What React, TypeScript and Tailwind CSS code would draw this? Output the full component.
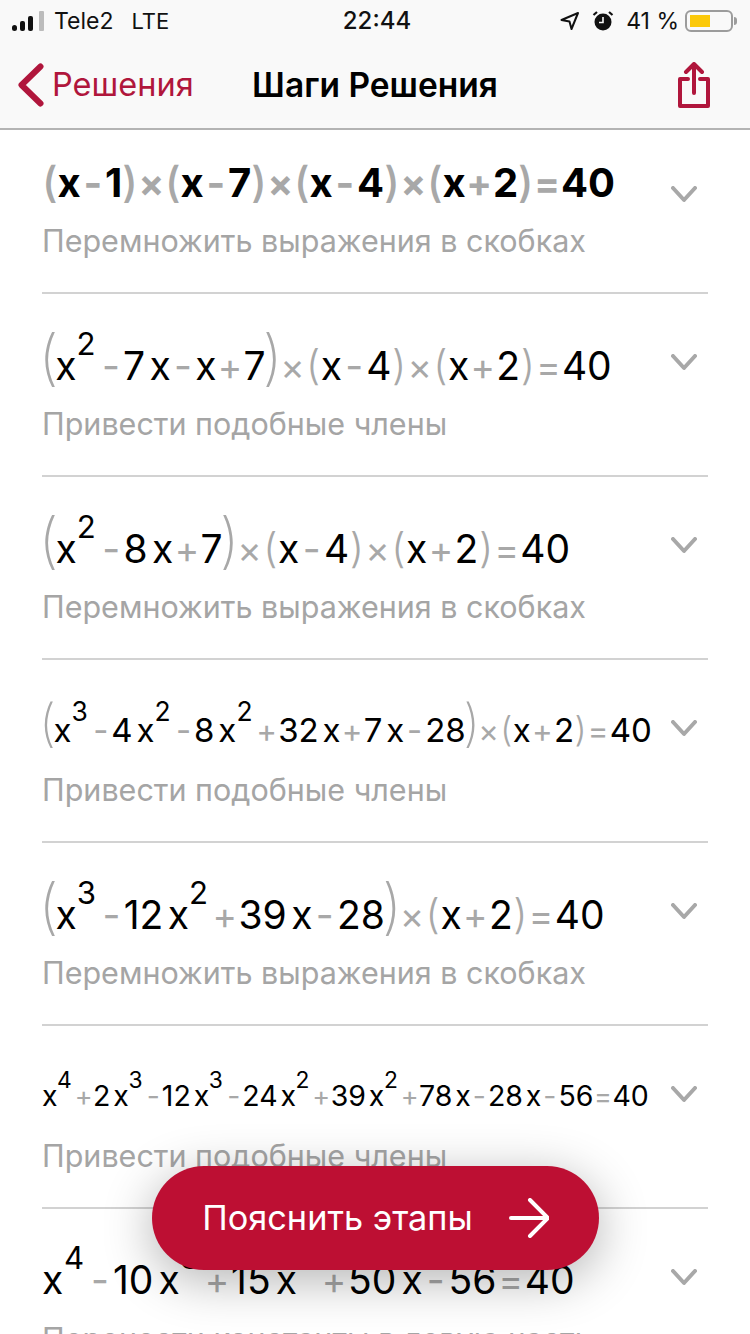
const Token = ({ value, prev, bold }: { value: string; prev?: string; bold: boolean }) => {
  if (value.startsWith('^'))
    return <span className="-translate-y-[0.8em] text-[0.8em] -ml-[0.02em] mr-[0.1em]">{value.slice(1)}</span>;
  if (value === '((' || value === '))')
    return (
      <span className="text-[1.55em] leading-none font-extralight text-[#a8a8a8] -translate-y-[0.02em] -mx-[0.06em]">
        {value[0]}
      </span>
    );
  if (value === '(' || value === ')')
    return (
      <span className={`text-[1.05em] text-[#a8a8a8] leading-none ${bold ? 'font-medium' : 'font-light'}`}>{value}</span>
    );
  if (value === '-') return <span className="text-[#a8a8a8] mx-[0.07em]">-</span>;
  if (['+', '=', '×'].includes(value))
    return <span className="text-[#a8a8a8] text-[0.95em] mx-[0.02em]">{value}</span>;
  if (value === 'x' && prev && /\d$/.test(prev)) return <span className="ml-[0.1em]">x</span>;
  return <span>{value}</span>;
};

type Step = {
  expr: string;
  hint: string;
  row: string;
  math: string;
  hintGap: string;
  chevron: string;
};

const steps: Step[] = [
  {
    expr: '( x - 1 ) × ( x - 7 ) × ( x - 4 ) × ( x + 2 ) = 40',
    hint: 'Перемножить выражения в скобках',
    row: 'h-[164px]',
    math: 'text-[40px] font-bold h-[68px] pt-[23px]',
    hintGap: 'mt-[25px]',
    chevron: 'mt-[56px]',
  },
  {
    expr: '(( x ^2 - 7 x - x + 7 )) × ( x - 4 ) × ( x + 2 ) = 40',
    hint: 'Привести подобные члены',
    row: 'h-[183px]',
    math: 'text-[39px] gap-x-[0.5px] h-[80px] pt-[34px]',
    hintGap: 'mt-[32px]',
    chevron: 'mt-[60px]',
  },
  {
    expr: '(( x ^2 - 8 x + 7 )) × ( x - 4 ) × ( x + 2 ) = 40',
    hint: 'Перемножить выражения в скобках',
    row: 'h-[183px]',
    math: 'text-[39px] gap-x-[0.6px] h-[80px] pt-[34px]',
    hintGap: 'mt-[32px]',
    chevron: 'mt-[60px]',
  },
  {
    expr: '(( x ^3 - 4 x ^2 - 8 x ^2 + 32 x + 7 x - 28 )) × ( x + 2 ) = 40',
    hint: 'Привести подобные члены',
    row: 'h-[183px]',
    math: 'text-[33px] gap-x-[0.55px] h-[80px] pt-[38px]',
    hintGap: 'mt-[32px]',
    chevron: 'mt-[60px]',
  },
  {
    expr: '(( x ^3 - 12 x ^2 + 39 x - 28 )) × ( x + 2 ) = 40',
    hint: 'Перемножить выражения в скобках',
    row: 'h-[183px]',
    math: 'text-[39px] gap-x-[0.6px] h-[80px] pt-[34px]',
    hintGap: 'mt-[32px]',
    chevron: 'mt-[60px]',
  },
  {
    expr: 'x ^4 + 2 x ^3 - 12 x ^3 - 24 x ^2 + 39 x ^2 + 78 x - 28 x - 56 = 40',
    hint: 'Привести подобные члены',
    row: 'h-[183px]',
    math: 'text-[28.5px] h-[80px] pt-[49px]',
    hintGap: 'mt-[32px]',
    chevron: 'mt-[60px]',
  },
  {
    expr: 'x ^4 - 10 x ^3 + 15 x ^2 + 50 x - 56 = 40',
    hint: 'Перенести константы в левую часть',
    row: 'h-[183px]',
    math: 'text-[39px] gap-x-[1.2px] h-[80px] pt-[42px]',
    hintGap: 'mt-[32px]',
    chevron: 'mt-[60px]',
  },
];

const StepRow = ({ step }: { step: Step }) => {
  const tokens = step.expr.split(' ');
  const bold = step.math.includes('font-bold');
  return (
    <div className={`flex justify-between border-b-2 border-[#d2d2d2] pr-[11px] ${step.row}`}>
      <div>
        <div className={`flex items-baseline whitespace-nowrap text-black ${step.math}`}>
          {tokens.map((t, i) => (
            <Token key={i} value={t} prev={tokens[i - 1]} bold={bold} />
          ))}
        </div>
        <p className={`text-[30.5px] leading-[36px] text-[#a5a5a5] whitespace-nowrap ${step.hintGap}`}>{step.hint}</p>
      </div>
      <svg width="26" height="17" viewBox="0 0 26 17" fill="none" className={`shrink-0 ${step.chevron}`}>
        <path d="M2 2l11 12L24 2" stroke="#a8a8a8" strokeWidth="4" strokeLinecap="round" strokeLinejoin="round" />
      </svg>
    </div>
  );
};

export default function App() {
  return (
    <div className="relative h-[1334px] w-[750px] overflow-hidden bg-white font-['Inter',sans-serif]">
      <header className="bg-[#f9f9f9] border-b-2 border-[#b4b4b4] h-[130px]">
        <div className="grid grid-cols-[1fr_auto_1fr] items-center h-[42px] px-[12px] text-[23px] text-[#111]">
          <div className="flex items-center">
            <svg width="32" height="20" viewBox="0 0 32 20">
              <rect x="0" y="14" width="5" height="6" rx="2.5" fill="#111" />
              <rect x="8" y="10" width="5" height="10" rx="2" fill="#111" />
              <rect x="16" y="5" width="5" height="15" rx="2" fill="#111" />
              <rect x="27" y="0" width="5" height="20" rx="1" fill="#bcbcbc" />
            </svg>
            <span className="ml-[10px]">Tele2</span>
            <span className="ml-[18px] text-[22px]">LTE</span>
          </div>
          <span className="ml-[4px] text-[24px] font-medium">22:44</span>
          <div className="flex items-center justify-end pr-[1px]">
            <svg width="20" height="20" viewBox="0 0 20 20" fill="none">
              <path d="M1.5 9L18 2l-6.5 16-2-7.5z" stroke="#111" strokeWidth="2" strokeLinejoin="round" />
            </svg>
            <svg width="22" height="22" viewBox="0 0 22 22" className="ml-[12px]">
              <circle cx="11" cy="12" r="8.5" fill="#111" />
              <path d="M11 7v5.5H7" stroke="#f9f9f9" strokeWidth="1.6" fill="none" />
              <path d="M1.5 5L5 2M20.5 5L17 2" stroke="#111" strokeWidth="2.2" />
            </svg>
            <span className="ml-[12px]">41 %</span>
            <div className="ml-[6px] h-[22px] w-[48px] rounded-[6px] border-2 border-[#9c9c9c] p-[3px]">
              <div className="h-full w-[20px] bg-[#fbc90a]" />
            </div>
            <div className="ml-[1px] h-[8px] w-[3px] rounded-r-full bg-[#9c9c9c]" />
          </div>
        </div>
        <div className="grid grid-cols-[1fr_auto_1fr] items-center h-[86px]">
          <div className="flex items-center pl-[18px] text-[#b0163c]">
            <svg width="26" height="44" viewBox="0 0 26 44" fill="none">
              <path d="M22.5 3.5L3.5 22l19 18.5" stroke="#b0163c" strokeWidth="6" strokeLinecap="round" strokeLinejoin="round" />
            </svg>
            <span className="ml-[8px] text-[32.5px]">Решения</span>
          </div>
          <h1 className="text-[33.5px] font-semibold text-black">Шаги Решения</h1>
          <div className="flex justify-end pr-[40px]">
            <svg width="32" height="46" viewBox="0 0 32 46" fill="none" stroke="#b0163c" strokeWidth="4" strokeLinecap="round" strokeLinejoin="round">
              <path d="M10 17H2v27h28V17h-8" />
              <path d="M16 31V3M8 10l8-8 8 8" />
            </svg>
          </div>
        </div>
      </header>

      <main className="px-[42px]">
        {steps.map((s, i) => (
          <StepRow key={i} step={s} />
        ))}
      </main>

      <button className="absolute left-[152px] top-[1166px] flex h-[104px] w-[447px] items-center justify-center gap-[36px] rounded-full bg-[#bd0f33] text-[34.3px] text-white shadow-[0_10px_50px_rgba(0,0,0,0.3)]">
        Пояснить этапы
        <svg width="40" height="40" viewBox="0 0 40 40" fill="none" stroke="white" strokeWidth="4" strokeLinecap="round" strokeLinejoin="round">
          <path d="M2 20h35M21 2l18 18-18 18" />
        </svg>
      </button>
    </div>
  );
}
